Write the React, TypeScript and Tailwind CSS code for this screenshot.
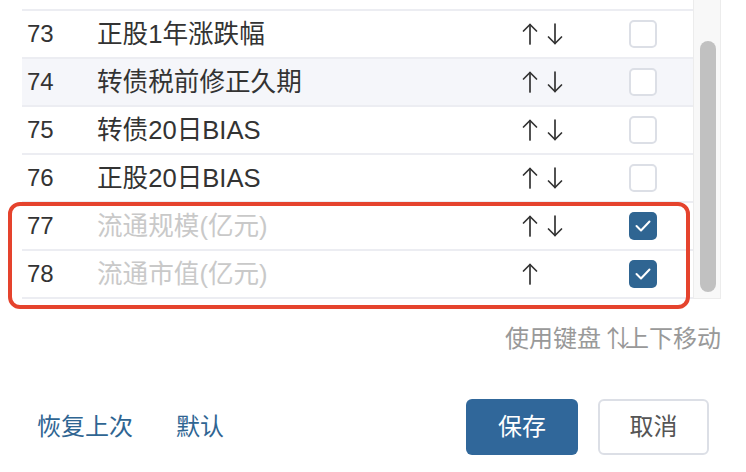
import React from 'react';

type Row = {
  no: number;
  name: string;
  up: boolean;
  down: boolean;
  checked: boolean;
  disabled?: boolean;
  shaded?: boolean;
  partial?: boolean;
};

const rows: Row[] = [
  { no: 72, name: '', up: false, down: false, checked: true, partial: true },
  { no: 73, name: '正股1年涨跌幅', up: true, down: true, checked: false },
  { no: 74, name: '转债税前修正久期', up: true, down: true, checked: false, shaded: true },
  { no: 75, name: '转债20日BIAS', up: true, down: true, checked: false },
  { no: 76, name: '正股20日BIAS', up: true, down: true, checked: false },
  { no: 77, name: '流通规模(亿元)', up: true, down: true, checked: true, disabled: true },
  { no: 78, name: '流通市值(亿元)', up: true, down: false, checked: true, disabled: true },
];

const font = "font-['Liberation_Sans','Noto_Sans_CJK_SC',sans-serif]";

function ArrowUp() {
  return (
    <svg width="16" height="22" viewBox="0 0 16 22" fill="none" stroke="#333" strokeWidth="1.7" strokeLinecap="round" strokeLinejoin="round">
      <path d="M8 1.5V21" />
      <path d="M1.5 8L8 1.5L14.5 8" />
    </svg>
  );
}

function ArrowDown() {
  return (
    <svg width="16" height="22" viewBox="0 0 16 22" fill="none" stroke="#333" strokeWidth="1.7" strokeLinecap="round" strokeLinejoin="round">
      <path d="M8 1V20.5" />
      <path d="M1.5 14L8 20.5L14.5 14" />
    </svg>
  );
}

function Checkbox({ checked }: { checked: boolean }) {
  if (checked) {
    return (
      <div className="w-[28px] h-[28px] rounded-[5px] bg-[#2f6592] flex items-center justify-center">
        <svg width="16" height="12" viewBox="0 0 16 12" fill="none" stroke="#fff" strokeWidth="2" strokeLinecap="round" strokeLinejoin="round">
          <path d="M1.5 6L6 10.5L14.5 1.5" />
        </svg>
      </div>
    );
  }
  return <div className="w-[28px] h-[28px] rounded-[5px] border-2 border-[#dcdfe6] bg-white" />;
}

function TableRow({ row }: { row: Row }) {
  return (
    <div
      className={`h-[48px] flex items-center border-b-2 border-[#ecedf2] ${row.shaded ? 'bg-[#f5f6fa]' : 'bg-white'}`}
    >
      <span className="w-[75px] pl-[5px] text-[24px] text-[#333]">{row.partial ? '' : row.no}</span>
      <span className={`w-[420px] text-[25.6px] ${row.disabled ? 'text-[#c9c9c9]' : 'text-[#333]'}`}>{row.name}</span>
      <div className="w-[61px] flex items-center gap-[9px] pl-[5px]">
        {row.up && <ArrowUp />}
        {row.down && <ArrowDown />}
      </div>
      <div className="w-[51px]" />
      <Checkbox checked={row.checked} />
    </div>
  );
}

export default function App() {
  return (
    <div className={`relative w-[746px] h-[472px] bg-white overflow-hidden ${font}`}>
      {/* list + scrollbar */}
      <div className="ml-[22px] w-[699px] h-[299px] flex">
        <div className="w-[671px] h-full overflow-hidden">
          <div className="mt-[-37px]">
            {rows.map((r) => (
              <TableRow key={r.no} row={r} />
            ))}
          </div>
        </div>
        <div className="relative w-[28px] h-full bg-[#f8f8f8] border-l border-r border-b border-[#ececec]">
          <div className="absolute left-[6px] top-[41px] w-[16px] h-[251px] rounded-full bg-[#c1c1c1]" />
        </div>
      </div>

      {/* highlighted rows annotation */}
      <div className="absolute left-[8px] top-[202px] w-[682px] h-[107px] border-4 border-[#e5432d] rounded-[12px]" />

      <div className="flex justify-end pr-[25px] mt-[24px]">
        <span className="text-[24px] leading-[28px] text-[#999]">
          使用键盘
          <span className="font-['Noto_Sans_CJK_SC'] tracking-[-14px] pr-[4px]">↑↓</span>
          上下移动
        </span>
      </div>

      <div className="flex items-center mt-[46px] pl-[37px]">
        <span className="text-[24px] text-[#2f6592]">恢复上次</span>
        <span className="ml-[43px] text-[24px] text-[#2f6592]">默认</span>
        <div className="flex-1" />
        <button className="w-[112px] h-[56px] rounded-[6px] bg-[#30679a] text-white text-[24px]">保存</button>
        <button className="ml-[20px] mr-[37px] w-[111px] h-[56px] rounded-[6px] border-2 border-[#dcdfe6] bg-white text-[#555] text-[24px]">
          取消
        </button>
      </div>
    </div>
  );
}
